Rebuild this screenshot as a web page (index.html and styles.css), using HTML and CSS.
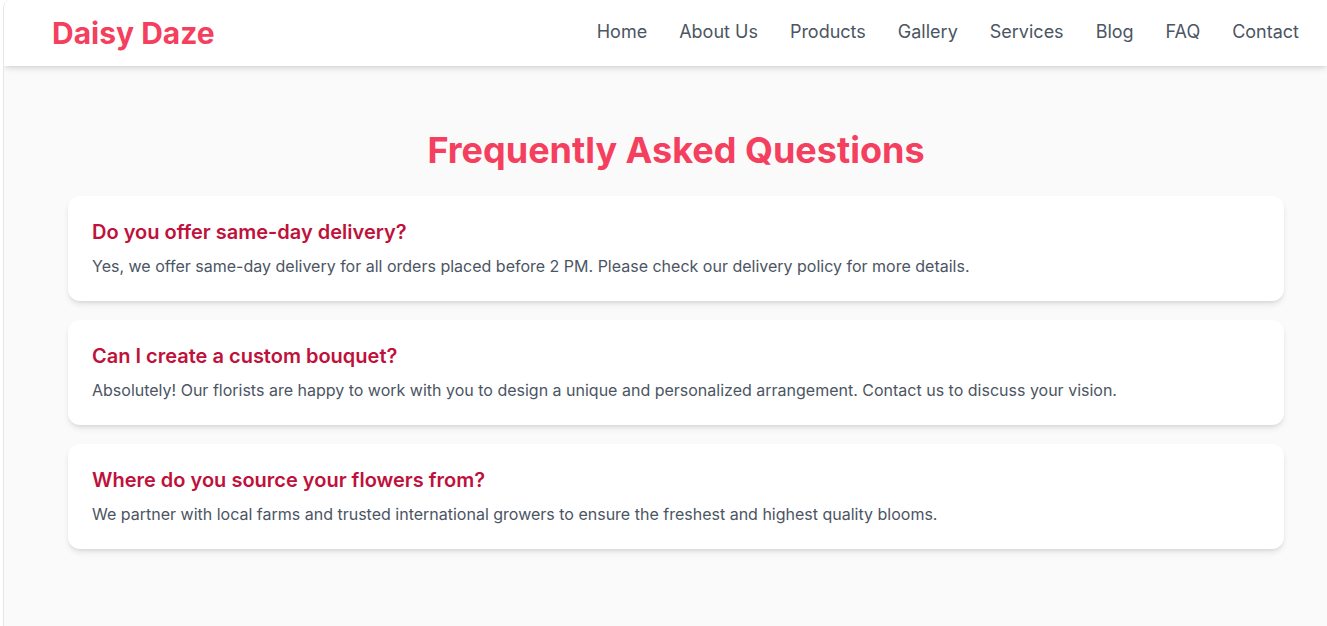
FILE: index.html
```html
<!DOCTYPE html>
<html lang="en">
<head>
<meta charset="utf-8">
<title>Daisy Daze - FAQ</title>
<link rel="stylesheet" href="styles.css">
</head>
<body>
<div class="frame">
  <header class="site-header">
    <a class="logo" href="#">Daisy Daze</a>
    <nav class="nav">
      <a href="#">Home</a>
      <a href="#">About Us</a>
      <a href="#">Products</a>
      <a href="#">Gallery</a>
      <a href="#">Services</a>
      <a href="#">Blog</a>
      <a href="#">FAQ</a>
      <a href="#">Contact</a>
    </nav>
  </header>
  <main class="main">
    <h1 class="page-title">Frequently Asked Questions</h1>
    <div class="faq-list">
      <div class="faq-card">
        <h2 class="faq-q">Do you offer same-day delivery?</h2>
        <p class="faq-a">Yes, we offer same-day delivery for all orders placed before 2 PM. Please check our delivery policy for more details.</p>
      </div>
      <div class="faq-card">
        <h2 class="faq-q">Can I create a custom bouquet?</h2>
        <p class="faq-a">Absolutely! Our florists are happy to work with you to design a unique and personalized arrangement. Contact us to discuss your vision.</p>
      </div>
      <div class="faq-card">
        <h2 class="faq-q">Where do you source your flowers from?</h2>
        <p class="faq-a">We partner with local farms and trusted international growers to ensure the freshest and highest quality blooms.</p>
      </div>
    </div>
  </main>
</div>
</body>
</html>
```
FILE: styles.css
```css
* { box-sizing: border-box; }
html, body { margin: 0; padding: 0; background: #ffffff; }
body {
  font-family: Inter, "Noto Sans", "Liberation Sans", sans-serif;
  overflow: hidden;
}
.frame {
  margin-left: 3px;
  min-height: 626px;
  background: #fafafa;
  border-left: 1px solid #e6e6e6;
  border-top-left-radius: 8px;
  overflow: hidden;
}
.site-header {
  height: 66px;
  background: #ffffff;
  display: flex;
  align-items: center;
  justify-content: space-between;
  padding: 0 28px 0 48px;
  box-shadow: 0 4px 6px -1px rgba(0,0,0,0.1), 0 2px 4px -2px rgba(0,0,0,0.1);
  position: relative;
  z-index: 1;
}
.logo {
  font-size: 30px;
  font-weight: 700;
  color: #f43f5e;
  text-decoration: none;
  line-height: 36px;
}
.nav {
  display: flex;
  gap: 32px;
  padding-bottom: 2px;
}
.nav a {
  font-size: 18px;
  color: #4b5563;
  text-decoration: none;
  line-height: 28px;
}
.main {
  padding: 64px 43px 40px 64px;
}
.page-title {
  margin: 0 0 26px;
  text-align: center;
  font-size: 36px;
  line-height: 40px;
  font-weight: 700;
  color: #f43f5e;
}
.faq-list {
  display: flex;
  flex-direction: column;
  gap: 19px;
}
.faq-card {
  background: #ffffff;
  border-radius: 12px;
  padding: 23px 24px 23px;
  box-shadow: 0 4px 6px -1px rgba(0,0,0,0.1), 0 2px 4px -2px rgba(0,0,0,0.1);
}
.faq-q {
  margin: 0 0 9px;
  font-size: 20px;
  line-height: 26px;
  font-weight: 600;
  color: #be123c;
}
.faq-a {
  margin: 0;
  font-size: 16px;
  line-height: 24px;
  color: #4b5563;
}
```
